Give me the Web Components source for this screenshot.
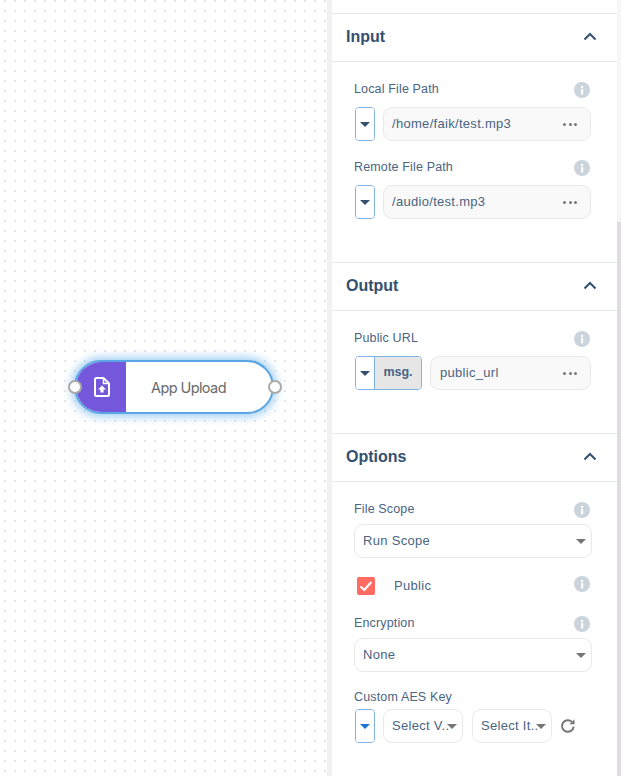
<!DOCTYPE html>
<html><head><meta charset="utf-8"><style>
html,body{margin:0;padding:0;height:776px;overflow:hidden;background:#fff}
body{font-family:"Liberation Sans",sans-serif}
flow-app{display:flex;width:621px;height:776px}
</style></head><body>
<flow-app>
  <flow-canvas><flow-node>App Upload</flow-node></flow-canvas>
  <side-panel>
    <panel-section title="Input" pb="24">
      <form-field label="Local File Path"><type-btn></type-btn><text-box value="/home/faik/test.mp3"></text-box></form-field>
      <form-field label="Remote File Path"><type-btn></type-btn><text-box value="/audio/test.mp3"></text-box></form-field>
    </panel-section>
    <panel-section title="Output" pb="24">
      <form-field label="Public URL"><type-btn msg></type-btn><text-box value="public_url" style="padding-left:9px"></text-box></form-field>
    </panel-section>
    <panel-section title="Options" pb="0">
      <form-field label="File Scope" rowh="22" mb="19"><select-box value="Run Scope"></select-box></form-field>
      <check-field label="Public"></check-field>
      <form-field label="Encryption" rowh="22" mb="18"><select-box value="None"></select-box></form-field>
      <form-field label="Custom AES Key" noinfo rowh="19" mb="0">
        <type-btn blue></type-btn>
        <select-box small value="Select V.."></select-box>
        <select-box small value="Select It.." style="margin-left:9px"></select-box>
        <svg width="16" height="16" viewBox="0 0 16 16" style="margin-left:8px;flex:none" fill="none" stroke="#757575" stroke-width="2"><path d="M13.6 8.6a5.8 5.8 0 1 1-1.7-4.7"/><path d="M14.5 1.2v5h-5z" fill="#757575" stroke="none"/></svg>
      </form-field>
    </panel-section>
  </side-panel>
</flow-app>
<script>
const C='#4a6482';
function def(name,css,html){
  customElements.define(name,class extends HTMLElement{
    connectedCallback(){
      if(this.shadowRoot)return;
      const r=this.attachShadow({mode:'open'});
      r.innerHTML='<style>'+css+'</style>'+(typeof html==='function'?html(this):html);
    }
  });
}
const infoIcon='<svg width="16" height="16" viewBox="0 0 16 16" style="display:block;flex:none"><circle cx="8" cy="8" r="8" fill="#cbd3dc"/><rect x="7" y="7" width="2.2" height="5.4" fill="#fff"/><circle cx="8.1" cy="4.9" r="1.25" fill="#fff"/></svg>';
const caret=(c)=>`<svg width="10" height="5" viewBox="0 0 10 5" style="display:block"><path d="M0 0h10L5 5z" fill="${c}"/></svg>`;
def('flow-canvas',`:host{display:block;position:relative;flex:none;width:327px;height:776px;background-color:#fff;background-image:radial-gradient(circle at 1px 1px,#e6e6e6 1px,transparent 1.1px);background-size:10px 10px;background-position:4px 0}`,'<slot></slot>');
def('flow-node',`:host{position:absolute;left:74px;top:360px;width:200px;height:54px;box-sizing:border-box;border:2px solid #5aa6e4;border-radius:27px;background:#fff;box-shadow:0 0 9px 3px rgba(90,170,235,.55);display:flex;font:14.5px Inter,sans-serif;letter-spacing:-.6px;color:#6a6a6a}
.ic{width:50px;padding-left:2px;box-sizing:border-box;background:#7457db;border-radius:25px 0 0 25px;display:flex;align-items:center;justify-content:center}
.t{flex:1;display:flex;align-items:center;justify-content:center;padding-right:21px}
.p{position:absolute;top:18px;width:10px;height:10px;border:2px solid #aaa;border-radius:50%;background:#fff}
.l{left:-8px}.r{right:-10px}`,
`<div class="ic"><svg width="16" height="20" viewBox="0 0 16 20"><path d="M2.5 1h7L15 6.5V17.5a1.5 1.5 0 0 1-1.5 1.5h-11A1.5 1.5 0 0 1 1 17.5V2.5A1.5 1.5 0 0 1 2.5 1z" fill="none" stroke="#fff" stroke-width="2"/><path d="M9.5 1v5.5H15" fill="none" stroke="#fff" stroke-width="1.5"/><path d="M8 8.6l4 4H9.6v3H6.4v-3H4z" fill="#fff"/></svg></div><div class="t"><slot></slot></div><span class="p l"></span><span class="p r"></span>`);
def('side-panel',`:host{display:flex;flex-direction:column;box-sizing:border-box;flex:none;width:294px;height:776px;padding:13px 4px 0 0;border-left:5px solid #f1f1f1;background:linear-gradient(#f6f6f6 0 222px,#e0dde0 222px) right top/4px 100% no-repeat,#fff;overflow:hidden}`,'<slot></slot>');
def('panel-section',`:host{display:block}
header{box-sizing:border-box;height:49px;border-top:1px solid #e6e9ec;border-bottom:1px solid #e6e9ec;display:flex;align-items:center;justify-content:space-between;padding:0 20px 2px 14px;font:bold 16px "Liberation Sans",sans-serif;color:#34506f;background:#fff}
.b{padding:20px 26px 0 22px}`,
e=>`<header><span>${e.getAttribute('title')}</span><svg width="14" height="9" viewBox="0 0 14 9"><path d="M1.5 7.5L7 2l5.5 5.5" fill="none" stroke="#34506f" stroke-width="2"/></svg></header><div class="b" style="padding-bottom:${e.getAttribute('pb')}px"><slot></slot></div>`);
def('form-field',`:host{display:block;margin-bottom:19px}
.top{display:flex;justify-content:space-between;align-items:flex-start;padding-right:1px;font:12.5px/14px "Liberation Sans",sans-serif;letter-spacing:.15px;color:${C}}
.row{display:flex;align-items:center;padding-left:1px}`,
e=>{const h=e.getAttribute('rowh')||25,m=e.getAttribute('mb');if(m!==null)e.style.marginBottom=m+'px';
return `<div class="top" style="height:${h}px"><span>${e.getAttribute('label')}</span>${e.hasAttribute('noinfo')?'':infoIcon}</div><div class="row"><slot></slot></div>`});
def('check-field',`:host{display:flex;align-items:flex-start;height:39px;padding-left:3px;font:13px/18px "Liberation Sans",sans-serif;letter-spacing:.3px;color:${C}}
.c{width:18px;height:18px;border-radius:2px;background:#ff6b60;flex:none}
.l{margin-left:19px;flex:1}
svg{display:block}`,
`<span class="c"><svg width="18" height="18" viewBox="0 0 18 18"><path d="M3.5 9.5l3.8 3.5 7-8" fill="none" stroke="#fff" stroke-width="2.2"/></svg></span><span class="l">Public</span><span style="margin:-1px 1px 0 0">${infoIcon}</span>`);
def('type-btn',`:host{display:flex;box-sizing:border-box;height:34px;flex:none;border:1px solid #7fb2e5;border-radius:4px;overflow:hidden;margin-right:8px;font:bold 12.5px "Liberation Sans",sans-serif;color:${C}}
.a{width:18px;display:flex;align-items:center;justify-content:center;background:#fff}
.m{width:47px;box-sizing:border-box;background:#e6e6e6;border-left:1px solid #7fb2e5;display:flex;align-items:center;justify-content:center;padding-bottom:2px}`,
e=>`<span class="a">${caret(e.hasAttribute('blue')?'#1a76d2':'#34506f')}</span>${e.hasAttribute('msg')?'<span class="m">msg.</span>':''}`);
def('text-box',`:host{display:flex;box-sizing:border-box;flex:1;min-width:0;height:34px;align-items:center;justify-content:space-between;border:1px solid #e9e9e9;border-radius:9px;background:#f9f9f9;padding:0 13px 2px 8px;font:13px "Liberation Sans",sans-serif;letter-spacing:.3px;color:${C}}
.d{display:flex;gap:2.4px;padding-top:2px}.d i{width:3px;height:3px;border-radius:50%;background:#777}`,
e=>`<span>${e.getAttribute('value')}</span><span class="d"><i></i><i></i><i></i></span>`);
def('select-box',`:host{display:flex;position:relative;box-sizing:border-box;flex:none;height:34px;align-items:center;border:1px solid #e9e9e9;border-radius:9px;background:#fff;font:13px "Liberation Sans",sans-serif;letter-spacing:.3px;color:${C};width:238px;margin-left:-1px;padding:0 0 2px 8px}
:host([small]){width:80px;margin-left:0;padding-left:8px}
.v{white-space:nowrap}
.k{position:absolute;right:5px;top:14px}`,
e=>`<span class="v">${e.getAttribute('value')}</span><span class="k">${caret('#757575')}</span>`);
</script>
</body></html>
